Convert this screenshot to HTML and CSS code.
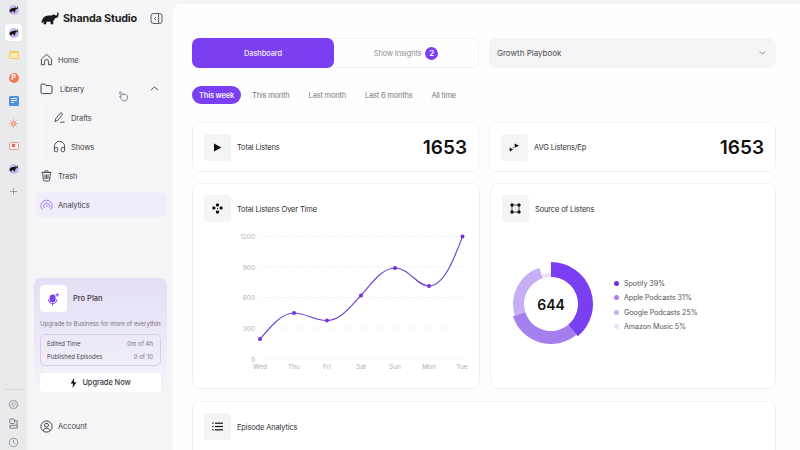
FILE: index.html
```html
<!DOCTYPE html>
<html lang="en">
<head>
    <meta charset="UTF-8">
    <title>Shanda Studio - Analytics</title>
    <link rel="stylesheet" href="styles.css">
</head>
<body>
    <svg class="defs" width="0" height="0" aria-hidden="true">
        <symbol id="elephant" viewBox="0 0 20 14">
            <path d="M0.5 12C1 8 3 4.5 7 4C9 3.6 10.5 4 12 3.6C13 2.4 15 2.4 16 3.4C17 4 17.6 3.8 18 2.6C18.2 1.8 18 1.2 17.4 0.9L19 0.4C20 1.4 19.8 4 18.6 5.4C17.6 6.6 16.2 6.8 15.4 6.6C15.2 8 14.4 9 13.6 9.6L13.6 13.4L10.8 13.4L10.4 10.4C8.8 10.8 7.6 10.6 6.4 10.2L5.6 13.4L2.8 13.4L3 10C2.4 11 1.6 12 0.5 12Z" fill="currentColor"/>
        </symbol>
    </svg>

    <nav class="rail">
        <div class="rail-apps">
            <span class="rail-app"><span class="app-logo"><svg width="9" height="7"><use href="#elephant"/></svg></span></span>
            <span class="rail-app active"><span class="app-logo"><svg width="9" height="7"><use href="#elephant"/></svg></span></span>
            <span class="rail-app"><span class="app-yellow"></span></span>
            <span class="rail-app"><span class="app-orange">P</span></span>
            <span class="rail-app"><span class="app-blue"><i></i><i></i><i></i></span></span>
            <span class="rail-app">
                <svg width="11" height="11" viewBox="0 0 11 11"><circle cx="5.5" cy="5.5" r="2.6" fill="#ee9c88"/><path d="M5.5 0.8V10.2M0.8 5.5H10.2M2.2 2.2L8.8 8.8M8.8 2.2L2.2 8.8" stroke="#f0b0a0" stroke-width="1"/></svg>
            </span>
            <span class="rail-app"><span class="app-red"><i></i></span></span>
            <span class="rail-app"><span class="app-logo"><svg width="9" height="7"><use href="#elephant"/></svg></span></span>
            <span class="rail-app">
                <svg width="9" height="9" viewBox="0 0 9 9"><path d="M4.5 1V8M1 4.5H8" stroke="#8a8d92" stroke-width="0.8"/></svg>
            </span>
        </div>
        <div class="rail-tools">
            <svg width="11" height="11" viewBox="0 0 12 12" fill="none" stroke="#9a9da2" stroke-width="1"><circle cx="6" cy="6" r="1.8"/><circle cx="6" cy="6" r="4.4" stroke-dasharray="1.6 .6" stroke-width="1.6"/></svg>
            <svg width="11" height="11" viewBox="0 0 12 12" fill="none" stroke="#6f7277" stroke-width="1"><rect x="2" y="1" width="5" height="5" rx="1"/><path d="M2 8H10V11H2ZM7 3H10V8"/></svg>
            <svg width="11" height="11" viewBox="0 0 12 12" fill="none" stroke="#8a8d92" stroke-width="1"><circle cx="6" cy="6" r="4.6"/><path d="M6 3.2V6L8 7.4"/></svg>
        </div>
    </nav>

    <aside class="sidebar">
        <div class="brand">
            <svg class="brand-logo" width="18" height="13"><use href="#elephant"/></svg>
            <span class="brand-name">Shanda Studio</span>
            <svg class="collapse" width="13" height="13" viewBox="0 0 13 13" fill="none" stroke="#4b4d52" stroke-width="0.9"><rect x="1" y="1.5" width="11" height="10" rx="2.4"/><path d="M8.6 1.5V11.5M6 5L4.4 6.5L6 8"/></svg>
        </div>

        <ul class="nav">
            <li class="nav-item">
                <svg width="13" height="13" viewBox="0 0 13 13" fill="none" stroke="#3a3c40" stroke-width="0.9"><path d="M1.4 11.8V6L6.5 1.4L11.6 6V11.8H8.6V8.6A2.1 2.1 0 0 0 4.4 8.6V11.8Z"/></svg>
                <span>Home</span>
            </li>
            <li class="nav-item nav-library">
                <svg width="13" height="13" viewBox="0 0 13 13" fill="none" stroke="#2f3135" stroke-width="0.9"><path d="M1 3.2A1.2 1.2 0 0 1 2.2 2H4.8L6 3.6H10.6A1.4 1.4 0 0 1 12 5V10.2A1.4 1.4 0 0 1 10.6 11.6H2.4A1.4 1.4 0 0 1 1 10.2Z"/></svg>
                <span>Library</span>
                <svg class="chevron" width="9" height="5" viewBox="0 0 9 5" fill="none" stroke="#3a3c40" stroke-width="0.9"><path d="M1 4L4.5 1L8 4"/></svg>
                <svg class="cursor" width="11" height="12" viewBox="0 0 11 12"><path d="M2.6 1.6L5 5.2L5.6 3.8L7 4.6L8 4.4L9.6 6L9.4 8.8L7.8 10.8H5L1.6 6.6L3.2 6.6L1.4 2.2Z" fill="#f4f4f6" stroke="#6b6d72" stroke-width="0.8"/></svg>
            </li>
            <li class="sub-nav">
                <div class="nav-item">
                    <svg width="13" height="13" viewBox="0 0 13 13" fill="none" stroke="#3a3c40" stroke-width="0.9"><path d="M2 10.6L2.8 7.6L7 2.4A1.3 1.3 0 0 1 9 4.1L4.8 9.4ZM7.2 11.2H11.6"/></svg>
                    <span>Drafts</span>
                </div>
                <div class="nav-item">
                    <svg width="13" height="13" viewBox="0 0 13 13" fill="none" stroke="#3a3c40" stroke-width="0.9"><path d="M1.4 8.6V6.4A5.1 5.1 0 0 1 11.6 6.4V8.6"/><rect x="1.4" y="7.4" width="3.4" height="4.4" rx="1.6"/><rect x="8.2" y="7.4" width="3.4" height="4.4" rx="1.6"/></svg>
                    <span>Shows</span>
                </div>
            </li>
            <li class="nav-item">
                <svg width="13" height="13" viewBox="0 0 13 13" fill="none" stroke="#3a3c40" stroke-width="0.9"><path d="M1.4 3.4H11.6M4.6 3.2A1.9 1.6 0 0 1 8.4 3.2M2.6 3.6L3.4 11A1.2 1.2 0 0 0 4.6 12H8.4A1.2 1.2 0 0 0 9.6 11L10.4 3.6M5 5.6V10M6.5 5.6V10M8 5.6V10"/></svg>
                <span>Trash</span>
            </li>
            <li class="nav-item active">
                <svg width="13" height="13" viewBox="0 0 13 13" fill="none" stroke="#9474e2" stroke-width="0.9"><path d="M2.2 11.4A5.6 5.6 0 1 1 10.8 11.4M4.6 10A3 3 0 1 1 9 9.6"/><path d="M6.8 6.4V9"/></svg>
                <span>Analytics</span>
            </li>
        </ul>

        <section class="plan">
            <div class="plan-head">
                <span class="plan-icon">
                    <svg width="13" height="14" viewBox="0 0 13 14" fill="#7b3ff2"><rect x="2.6" y="2.4" width="6" height="8" rx="3"/><path d="M1 7.6H2A3.6 3.6 0 0 0 9.2 7.6H10.2A4.6 4.6 0 0 1 6.1 12V13.6H5.1V12A4.6 4.6 0 0 1 1 7.6Z"/><path d="M10.2 0.4L10.8 2.2L12.6 2.8L10.8 3.4L10.2 5.2L9.6 3.4L7.8 2.8L9.6 2.2Z"/></svg>
                </span>
                <span class="plan-name">Pro Plan</span>
            </div>
            <p class="plan-text">Upgrade to Business for more of everything</p>
            <div class="plan-usage">
                <div class="usage-row"><span>Edited Time</span><span class="usage-val">0m of 4h</span></div>
                <div class="usage-row"><span>Published Episodes</span><span class="usage-val">0 of 10</span></div>
            </div>
            <button class="upgrade-btn">
                <svg width="7" height="10" viewBox="0 0 7 10" fill="#111"><path d="M4.2 0L0.6 5.6H3L2.6 10L6.4 4.2H3.8Z"/></svg>
                Upgrade Now
            </button>
        </section>

        <div class="nav-item account">
            <svg width="13" height="13" viewBox="0 0 13 13" fill="none" stroke="#2f3135" stroke-width="0.9"><circle cx="6.5" cy="6.5" r="5.6"/><circle cx="6.5" cy="5.2" r="2"/><path d="M3 10.8C3.6 9 5 8.4 6.5 8.4S9.4 9 10 10.8"/></svg>
            <span>Account</span>
        </div>
    </aside>

    <main class="main">
        <div class="top-row">
            <div class="tabs">
                <button class="tab active">Dashboard</button>
                <button class="tab">Show Insights <span class="badge">2</span></button>
            </div>
            <div class="select">
                <span>Growth Playbook</span>
                <svg width="7" height="4" viewBox="0 0 7 4" fill="none" stroke="#777" stroke-width="0.8"><path d="M0.6 0.6L3.5 3.2L6.4 0.6"/></svg>
            </div>
        </div>

        <div class="pills">
            <button class="pill active">This week</button>
            <button class="pill">This month</button>
            <button class="pill">Last month</button>
            <button class="pill">Last 6 months</button>
            <button class="pill">All time</button>
        </div>

        <div class="grid stat-row">
            <div class="card stat">
                <span class="card-icon"><svg width="9" height="9" viewBox="0 0 9 9"><path d="M1 0.6L8.4 4.5L1 8.4Z" fill="#111"/></svg></span>
                <span class="card-title">Total Listens</span>
                <span class="stat-num">1653</span>
            </div>
            <div class="card stat">
                <span class="card-icon"><svg width="11" height="9" viewBox="0 0 11 9" fill="#111"><path d="M5.6 0.4L10 2.8L5.8 4.8Z"/><path d="M0.6 4.6L4 6.4L0.8 8.4Z"/><circle cx="4.6" cy="4.6" r="0.5"/></svg></span>
                <span class="card-title">AVG Listens/Ep</span>
                <span class="stat-num">1653</span>
            </div>
        </div>

        <div class="grid chart-row">
            <div class="card chart-card">
                <div class="card-head">
                    <span class="card-icon"><svg width="11" height="11" viewBox="0 0 11 11" fill="#111"><rect x="4" y="0.6" width="3" height="3" rx="1"/><rect x="0.4" y="3.6" width="3" height="3" rx="1"/><rect x="7.6" y="3.6" width="3" height="3" rx="1"/><rect x="4" y="7.4" width="3" height="3" rx="0.6"/><circle cx="5.5" cy="5.4" r="0.6"/></svg></span>
                    <span class="card-title">Total Listens Over Time</span>
                </div>
                <svg class="line-chart" width="264" height="150" viewBox="0 0 264 150">
                    <g class="grid-lines">
                        <path d="M56 7.5H254M56 38H258M56 68.5H258M56 99H258"/>
                    </g>
                    <path class="axis" d="M56 130H258"/>
                    <g class="tick-y">
                        <text x="51" y="10">1200</text>
                        <text x="51" y="40.5">900</text>
                        <text x="51" y="71">600</text>
                        <text x="51" y="101.5">300</text>
                        <text x="51" y="132.5">0</text>
                    </g>
                    <g class="tick-x">
                        <text x="56" y="140">Wed</text>
                        <text x="90" y="140">Thu</text>
                        <text x="123" y="140">Fri</text>
                        <text x="157" y="140">Sat</text>
                        <text x="191" y="140">Sun</text>
                        <text x="225" y="140">Mon</text>
                        <text x="258" y="140">Tue</text>
                    </g>
                    <path class="curve" d="M56 110C68 96 78 84 90 84C102 84 111 92 123 91.5C137 91 146 78 157 66.5C168 54 178 39 191 39C205 39 213 57 225 57C240 57 250 30 258.5 7.5"/>
                    <g class="dots">
                        <circle cx="56" cy="110" r="2"/>
                        <circle cx="90" cy="84" r="2"/>
                        <circle cx="123" cy="91.5" r="2"/>
                        <circle cx="157" cy="66.5" r="2"/>
                        <circle cx="191" cy="39" r="2"/>
                        <circle cx="225" cy="57" r="2"/>
                        <circle cx="258.5" cy="7.5" r="2"/>
                    </g>
                </svg>
            </div>

            <div class="card chart-card">
                <div class="card-head">
                    <span class="card-icon"><svg width="11" height="11" viewBox="0 0 11 11"><path d="M2 2H9V9H2Z" fill="none" stroke="#111" stroke-width="0.7"/><circle cx="2" cy="2" r="1.7" fill="#111"/><circle cx="9" cy="2" r="1.7" fill="#111"/><circle cx="2" cy="9" r="1.7" fill="#111"/><circle cx="9" cy="9" r="1.7" fill="#111"/></svg></span>
                    <span class="card-title">Source of Listens</span>
                </div>
                <div class="donut-wrap">
                    <div class="donut">
                        <svg width="90" height="90" viewBox="0 0 90 90">
                            <path d="M8.86 56.74A38 38 0 0 1 33.26 8.86L36.66 19.32A27 27 0 0 0 19.32 53.34Z" fill="#c6aff5"/>
                            <path d="M35.42 15.52A31 31 0 0 1 45 14L45 18A27 27 0 0 0 36.66 19.32Z" fill="#e8e2f8"/>
                            <path d="M70.48 75.82A40 40 0 0 1 6.96 57.36L19.32 53.34A27 27 0 0 0 62.2 65.8Z" fill="#a57ff0"/>
                            <path d="M45 3A42 42 0 0 1 71.76 77.36L62.2 65.8A27 27 0 0 0 45 18Z" fill="#7b3ff2"/>
                        </svg>
                        <span class="donut-num">644</span>
                    </div>
                    <ul class="legend">
                        <li><i class="dot-1"></i>Spotify 39%</li>
                        <li><i class="dot-2"></i>Apple Podcasts 31%</li>
                        <li><i class="dot-3"></i>Google Podcasts 25%</li>
                        <li><i class="dot-4"></i>Amazon Music 5%</li>
                    </ul>
                </div>
            </div>
        </div>

        <div class="card episode">
            <div class="card-head">
                <span class="card-icon"><svg width="11" height="9" viewBox="0 0 11 9" fill="#111"><rect x="3" y="0.6" width="8" height="1.2"/><rect x="3" y="3.9" width="8" height="1.2"/><rect x="3" y="7.2" width="8" height="1.2"/><rect x="0.2" y="0.6" width="1.4" height="1.2"/><rect x="0.2" y="3.9" width="1.4" height="1.2"/><rect x="0.2" y="7.2" width="1.4" height="1.2"/></svg></span>
                <span class="card-title">Episode Analytics</span>
            </div>
        </div>
    </main>
</body>
</html>
```

FILE: styles.css
```css
* {
    box-sizing: border-box;
}

body {
    margin: 0;
    width: 800px;
    height: 450px;
    display: flex;
    overflow: hidden;
    background-color: #f5f5f7;
    font-family: 'Inter', 'Liberation Sans', sans-serif;
    font-size: 7.5px;
    color: #333;
}

button {
    font-family: inherit;
    border: none;
    cursor: pointer;
}

ul {
    list-style: none;
    margin: 0;
    padding: 0;
}

.defs {
    position: absolute;
}

/* App rail */
.rail {
    width: 27px;
    flex-shrink: 0;
    background-color: #e9eaec;
    display: flex;
    flex-direction: column;
    align-items: center;
    justify-content: space-between;
}

.rail-apps {
    display: flex;
    flex-direction: column;
    align-items: center;
    gap: 5px;
    padding-top: 1px;
}

.rail-app {
    width: 17px;
    height: 17.7px;
    display: flex;
    align-items: center;
    justify-content: center;
    border-radius: 4px;
}

.rail-app.active {
    background-color: #fff;
}

.app-logo {
    width: 10px;
    height: 10px;
    border-radius: 50%;
    background-color: #c9b6f0;
    color: #111;
    display: flex;
    align-items: center;
    justify-content: center;
}

.app-yellow {
    width: 10px;
    height: 8px;
    border-radius: 2px;
    border: 2px solid #f2cb62;
    border-width: 2px 1px 1px;
    background-color: #f9e9b4;
}

.app-orange {
    width: 10px;
    height: 10px;
    border-radius: 50%;
    background-color: #ed7a55;
    color: #fff;
    font-size: 7px;
    font-weight: 700;
    line-height: 10px;
    text-align: center;
}

.app-blue {
    width: 10px;
    height: 10px;
    border-radius: 1.5px;
    background-color: #4f8fdf;
    display: flex;
    flex-direction: column;
    gap: 1px;
    padding: 2px 2px;
}

.app-blue i {
    height: 1px;
    background-color: #e4eefb;
}

.app-blue i:last-child {
    width: 3px;
}

.app-red {
    width: 10px;
    height: 8px;
    border: 1px solid #e79a90;
    border-radius: 1.5px;
    background-color: #fbeeec;
    display: flex;
    align-items: center;
    justify-content: center;
}

.app-red i {
    width: 3px;
    height: 3px;
    background-color: #d9675a;
}

.rail-tools {
    width: 100%;
    display: flex;
    flex-direction: column;
    align-items: center;
    gap: 8px;
    margin-bottom: 2px;
    padding-top: 10px;
    position: relative;
}

.rail-tools::before {
    content: "";
    position: absolute;
    top: 0;
    left: 5px;
    right: 4px;
    height: 1px;
    background-color: #d6d7da;
}

/* Sidebar */
.sidebar {
    width: 146px;
    flex-shrink: 0;
    padding: 0 6px 0 7px;
    display: flex;
    flex-direction: column;
}

.brand {
    display: flex;
    align-items: center;
    height: 47px;
    padding: 0 4px 10px 7px;
}

.brand-logo {
    color: #1a1a1c;
}

.brand-name {
    margin-left: 4px;
    font-size: 10.8px;
    font-weight: 700;
    color: #1e1e20;
    letter-spacing: -0.2px;
}

.collapse {
    margin-left: auto;
}

.nav {
    display: flex;
    flex-direction: column;
    gap: 4px;
}

.nav-item {
    height: 25px;
    display: flex;
    align-items: center;
    gap: 5px;
    padding-left: 6px;
    border-radius: 6px;
    font-size: 7.5px;
    letter-spacing: -0.1px;
    color: #3d3f44;
    position: relative;
}

.nav-item span {
    padding-top: 1px;
}

.nav-library {
    gap: 7px;
}

.chevron {
    margin-left: auto;
    margin-right: 8px;
}

.cursor {
    position: absolute;
    left: 84px;
    top: 14px;
}

.sub-nav {
    display: flex;
    flex-direction: column;
    gap: 4px;
    padding-left: 13px;
    position: relative;
}

.sub-nav::before {
    content: "";
    position: absolute;
    left: 12px;
    top: 0;
    bottom: 0;
    width: 1px;
    background-color: #ececef;
}

.nav-item.active {
    background-color: #f0ecfa;
    margin-left: 2px;
    padding-left: 4px;
}

/* Plan card */
.plan {
    margin-top: 61px;
    height: 118px;
    padding: 7px 6px 0;
    border-radius: 7px;
    background: linear-gradient(180deg, #e5def5 0%, #eeeaf8 60%, #f5f5f7 100%);
}

.plan-head {
    display: flex;
    align-items: center;
    gap: 6px;
}

.plan-icon {
    width: 27px;
    height: 27px;
    border-radius: 4px;
    background-color: #fff;
    display: flex;
    align-items: center;
    justify-content: center;
}

.plan-name {
    font-size: 7.5px;
    font-weight: 500;
    color: #38383d;
}

.plan-text {
    margin: 7px 0 0;
    font-size: 6px;
    line-height: 9px;
    color: #77757f;
    white-space: nowrap;
    overflow: hidden;
}

.plan-usage {
    margin-top: 6px;
    height: 32px;
    padding: 0 7px 0 6px;
    border: 1px solid #d4cfe6;
    border-radius: 5px;
    display: flex;
    flex-direction: column;
    justify-content: center;
    gap: 5px;
}

.usage-row {
    display: flex;
    justify-content: space-between;
    font-size: 6px;
    line-height: 8px;
    color: #4a4a50;
}

.usage-val {
    color: #77757f;
}

.upgrade-btn {
    margin-top: 7px;
    width: 100%;
    height: 19px;
    border-radius: 4px;
    background-color: #fff;
    color: #3a3a3f;
    font-size: 7.5px;
    font-weight: 500;
    letter-spacing: -0.1px;
    display: flex;
    align-items: center;
    justify-content: center;
    gap: 5px;
}

.account {
    margin-top: 17.5px;
}

/* Main */
.main {
    flex: 1;
    min-width: 0;
    margin-top: 4px;
    padding: 34px 24px 0 19px;
    background-color: #fefefe;
    border-radius: 8px 0 0 0;
    overflow: hidden;
}

.top-row,
.grid {
    display: grid;
    grid-template-columns: 1fr 1fr;
    gap: 10px;
}

.tabs {
    height: 30px;
    display: flex;
    border: 1px solid #f1f1f3;
    border-radius: 7px;
}

.tab {
    background: none;
    font-size: 7.5px;
    letter-spacing: -0.15px;
    color: #8d8d93;
    border-radius: 7px;
    display: flex;
    align-items: center;
    justify-content: center;
    gap: 4px;
}

.tab:first-child {
    width: 142px;
    margin: -1px 0 -1px -1px;
}

.tab:last-child {
    flex: 1;
}

.tab.active {
    background-color: #7b3ff2;
    color: #f1eafe;
    font-weight: 500;
}

.badge {
    width: 13px;
    height: 13px;
    border-radius: 50%;
    background-color: #7b3ff2;
    color: #fff;
    font-size: 8px;
    font-weight: 600;
    line-height: 13px;
    text-align: center;
}

.select {
    height: 30px;
    padding: 0 10px 0 8px;
    border-radius: 7px;
    background-color: #f4f4f6;
    display: flex;
    align-items: center;
    justify-content: space-between;
    font-size: 8px;
    color: #4d4d52;
}

.pills {
    margin-top: 18px;
    height: 18px;
    display: flex;
    gap: 3px;
}

.pill {
    padding: 0 8px;
    border-radius: 9px;
    background: none;
    font-size: 7.5px;
    letter-spacing: -0.2px;
    color: #77777d;
}

.pill.active {
    background-color: #7b3ff2;
    color: #f4eeff;
    font-weight: 600;
    padding: 0 7px;
}

.card {
    background-color: #fff;
    border: 1px solid #f2f2f4;
    border-radius: 7px;
    padding: 11px;
}

.card-icon {
    width: 27px;
    height: 27px;
    flex-shrink: 0;
    border-radius: 4px;
    background-color: #f4f4f6;
    display: flex;
    align-items: center;
    justify-content: center;
}

.card-title {
    padding-top: 1px;
    font-size: 7.5px;
    letter-spacing: -0.15px;
    color: #2e2e32;
}

.card-head {
    display: flex;
    align-items: center;
    gap: 6px;
}

.stat-row {
    margin-top: 18px;
}

.stat {
    height: 50px;
    display: flex;
    align-items: center;
    gap: 6px;
}

.stat-num {
    margin-left: auto;
    font-size: 19px;
    font-weight: 600;
    color: #111;
}

.chart-row {
    margin-top: 11px;
}

.chart-card {
    height: 206px;
}

.line-chart {
    display: block;
    margin-top: 7px;
}

.grid-lines path {
    stroke: #f5f5f6;
    stroke-width: 1;
    stroke-dasharray: 14 2;
    fill: none;
}

.axis {
    stroke: #efeff1;
    stroke-dasharray: 2 2;
    fill: none;
}

.line-chart text {
    font-size: 6.5px;
    fill: #b0b0b0;
}

.tick-y text {
    text-anchor: end;
}

.tick-x text {
    text-anchor: middle;
}

.curve {
    fill: none;
    stroke: #7445d4;
    stroke-width: 1.2;
}

.dots circle {
    fill: #7530e0;
}

.donut-wrap {
    margin-top: 37px;
    margin-left: 4px;
    display: flex;
    align-items: center;
    gap: 18px;
}

.donut {
    width: 90px;
    height: 90px;
    position: relative;
}

.donut svg {
    display: block;
}

.donut-num {
    position: absolute;
    inset: 0;
    display: flex;
    align-items: center;
    justify-content: center;
    font-size: 14px;
    font-weight: 600;
    color: #111;
}

.legend {
    display: flex;
    flex-direction: column;
    gap: 4.4px;
    padding-top: 2px;
}

.legend li {
    height: 10px;
    display: flex;
    align-items: center;
    gap: 5px;
    font-size: 7.2px;
    letter-spacing: -0.1px;
    color: #55555b;
}

.legend i {
    width: 5px;
    height: 5px;
    border-radius: 50%;
}

.dot-1 {
    background-color: #7030e0;
}

.dot-2 {
    background-color: #a57ff0;
}

.dot-3 {
    background-color: #c6aff5;
}

.dot-4 {
    background-color: #e8e2f8;
}

.episode {
    margin-top: 12px;
    height: 100px;
}
```
